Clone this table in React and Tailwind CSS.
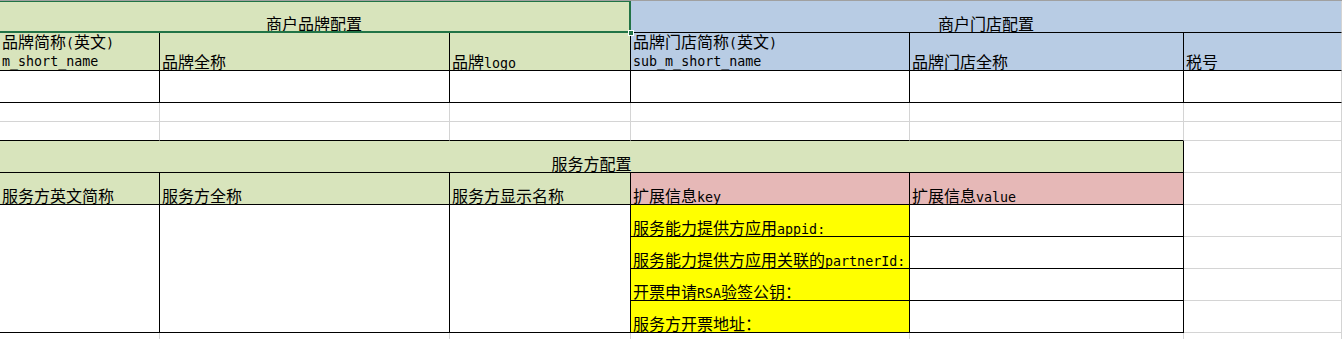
import React from 'react';

const GREEN = 'bg-[#d8e4bc]';
const BLUE = 'bg-[#b8cce4]';
const PINK = 'bg-[#e6b8b7]';
const YELLOW = 'bg-[#ffff00]';

// split ascii runs into a mono span so latin sits at half the CJK width
function T({ s }) {
  const parts = s.split(/([\x20-\x7e]+)/).filter(Boolean);
  return (
    <span className="block h-[18px] leading-[18px]">
      {parts.map((p, i) =>
        /^[\x20-\x7e]+$/.test(p) ? (
          <span key={i} className="font-['DejaVu_Sans_Mono',monospace] text-[13.33px] leading-[10px]">{p}</span>
        ) : (
          <span key={i}>{p}</span>
        )
      )}
    </span>
  );
}

function Cell({ bg = 'bg-white', r = 'k', b = 'k', className = '', center, children }) {
  const rc = r === 'k' ? 'border-r-black' : 'border-r-[#d4d4d4]';
  const bc = b === 'k' ? 'border-b-black' : 'border-b-[#d4d4d4]';
  return (
    <div className={`relative flex items-end overflow-visible whitespace-nowrap border-r border-b px-[2px] ${rc} ${bc} ${bg} ${center ? 'justify-center' : ''} ${className}`}>
      {children}
    </div>
  );
}

export default function App() {
  return (
    <div className="w-[1342px] h-[339px] overflow-hidden bg-white border-t border-t-[#a0a0a0] font-['Noto_Sans_CJK_SC',sans-serif] text-[16px] leading-[18px] text-black">
      <div className="grid grid-cols-[160px_290px_181px_279px_274px_158px] grid-rows-[32px_38px_32px_19px_19px_32px_32px_32px_32px_32px_32px_8px]">
        {/* row 1 */}
        <Cell bg={GREEN} className="col-span-3 z-10" center>
          <span className="pr-[2px]">商户品牌配置</span>
          <div className="pointer-events-none absolute -top-px -left-[2px] -right-px -bottom-px border-2 border-[#217346]" />
          <div className="absolute -right-[4px] -bottom-[4px] w-[6px] h-[6px] bg-[#217346] border border-white" />
        </Cell>
        <Cell bg={BLUE} r="g" className="col-span-3" center>
          <span>商户门店配置</span>
        </Cell>

        {/* row 2 */}
        <Cell bg={GREEN}>
          <div className="flex flex-col pb-[2px]">
            <T s="品牌简称(英文)" />
            <T s="m_short_name" />
          </div>
        </Cell>
        <Cell bg={GREEN}><T s="品牌全称" /></Cell>
        <Cell bg={GREEN}><T s="品牌logo" /></Cell>
        <Cell bg={BLUE}>
          <div className="flex flex-col pb-[2px]">
            <T s="品牌门店简称(英文)" />
            <T s="sub_m_short_name" />
          </div>
        </Cell>
        <Cell bg={BLUE}><T s="品牌门店全称" /></Cell>
        <Cell bg={BLUE} r="g"><T s="税号" /></Cell>

        {/* row 3 */}
        <Cell />
        <Cell />
        <Cell />
        <Cell />
        <Cell />
        <Cell r="g" />

        {/* rows 4-5 blank */}
        {[0, 1, 2, 3, 4, 5].map((i) => (
          <Cell key={'a' + i} r="g" b="g" />
        ))}
        {[0, 1, 2, 3, 4].map((i) => (
          <Cell key={'b' + i} r="g" b="k" />
        ))}
        <Cell r="g" b="g" />

        {/* row 6 */}
        <Cell bg={GREEN} className="col-span-5" center>
          <span>服务方配置</span>
        </Cell>
        <Cell r="g" b="g" />

        {/* row 7 */}
        <Cell bg={GREEN}><T s="服务方英文简称" /></Cell>
        <Cell bg={GREEN}><T s="服务方全称" /></Cell>
        <Cell bg={GREEN}><T s="服务方显示名称" /></Cell>
        <Cell bg={PINK}><T s="扩展信息key" /></Cell>
        <Cell bg={PINK}><T s="扩展信息value" /></Cell>
        <Cell r="g" b="g" />

        {/* rows 8-11 */}
        <Cell className="row-span-4" />
        <Cell className="row-span-4" />
        <Cell className="row-span-4" />
        <Cell bg={YELLOW}><T s="服务能力提供方应用appid:" /></Cell>
        <Cell />
        <Cell r="g" b="g" />
        <Cell bg={YELLOW}><T s="服务能力提供方应用关联的partnerId:" /></Cell>
        <Cell />
        <Cell r="g" b="g" />
        <Cell bg={YELLOW}><T s="开票申请RSA验签公钥：" /></Cell>
        <Cell />
        <Cell r="g" b="g" />
        <Cell bg={YELLOW}><T s="服务方开票地址：" /></Cell>
        <Cell />
        <Cell r="g" b="g" />

        {/* row 12 */}
        {[0, 1, 2, 3, 4, 5].map((i) => (
          <Cell key={'c' + i} r="g" b="g" />
        ))}
      </div>
    </div>
  );
}
